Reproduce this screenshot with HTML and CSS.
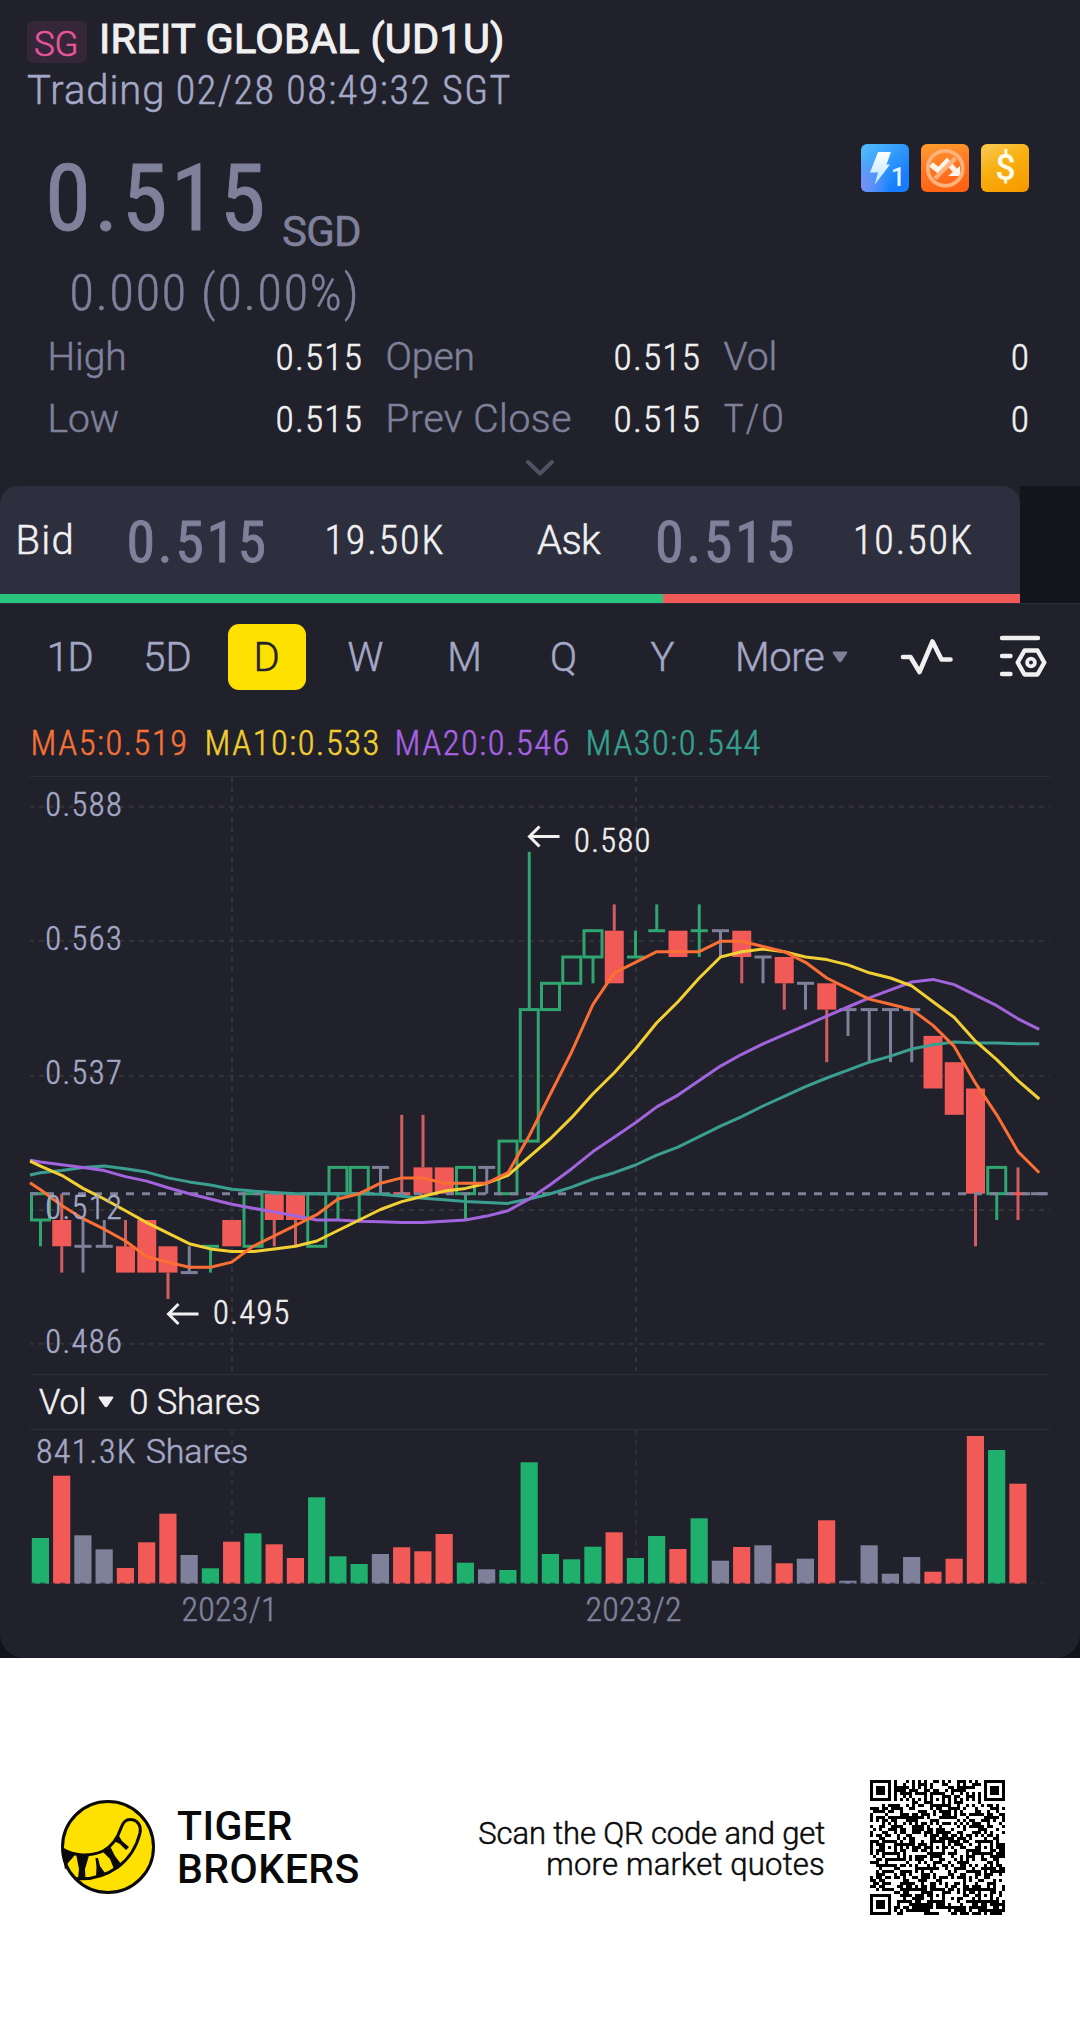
FILE: index.html
```html
<!DOCTYPE html>
<html lang="en">
<head>
<meta charset="utf-8">
<title>IREIT GLOBAL (UD1U)</title>
<link rel="stylesheet" href="styles.css">
</head>
<body>
<main class="card">
  <header class="header">
    <div class="title-row"><span class="market">SG</span><h1 class="title">IREIT GLOBAL (UD1U)</h1></div>
    <div class="status"><span class="word">Trading</span> 02/28 08:49:32 SGT</div>
  </header>

  <section class="quote">
    <div class="price">0.515</div>
    <div class="currency">SGD</div>
    <div class="badges">
      <svg width="48" height="48" viewBox="0 0 48 48">
        <defs><linearGradient id="blue" x1="0.2" y1="0" x2="0.9" y2="0.7"><stop offset="0" stop-color="#4fb8fb"/><stop offset="1" stop-color="#167dfc"/></linearGradient>
        <radialGradient id="violet" cx="0" cy="0.85" r="0.6"><stop offset="0" stop-color="#7b90f7"/><stop offset="1" stop-color="#7b90f7" stop-opacity="0"/></radialGradient>
        <linearGradient id="ice" x1="0" y1="0" x2="0" y2="1"><stop offset="0" stop-color="#fff"/><stop offset="1" stop-color="#b9e2ff"/></linearGradient></defs>
        <rect width="48" height="48" rx="6" fill="url(#blue)"/><rect width="48" height="48" rx="6" fill="url(#violet)"/>
        <path d="M17 8H30L25.500 20.500H29L13.500 41L17 28.500H9Z" fill="url(#ice)"/>
        <text class="badge-one" x="30" y="42">1</text>
      </svg>
      <svg width="48" height="48" viewBox="0 0 48 48">
        <defs><linearGradient id="orange" x1="0.4" y1="0" x2="0.6" y2="1"><stop offset="0" stop-color="#ff9a2c"/><stop offset="0.5" stop-color="#ff7323"/><stop offset="1" stop-color="#ff6210"/></linearGradient></defs>
        <rect width="48" height="48" rx="6" fill="url(#orange)"/>
        <path d="M10 20.500L17.500 26.500L26 17.500L34 26.500" fill="none" stroke="#fff5ea" stroke-width="5.500"/>
        <path d="M39 22V32H27Z" fill="#fff5ea"/>
        <path d="M14 34.500L34.500 14" stroke="#ffb27a" stroke-width="4.500"/>
        <circle cx="24.300" cy="24.300" r="17.500" fill="none" stroke="#ffb27a" stroke-width="3.800"/>
      </svg>
      <svg width="48" height="48" viewBox="0 0 48 48">
        <defs><linearGradient id="gold" x1="0.3" y1="0" x2="0.8" y2="1"><stop offset="0" stop-color="#f9c648"/><stop offset="0.4" stop-color="#f7b010"/><stop offset="1" stop-color="#f89a02"/></linearGradient></defs>
        <rect width="48" height="48" rx="6" fill="url(#gold)"/>
        <text class="badge-dollar" x="24.500" y="35.500">$</text>
      </svg>
    </div>
  </section>
  <div class="change">0.000 (0.00%)</div>

  <section class="stats">
    <div class="stat"><span>High</span><b>0.515</b></div>
    <div class="stat"><span>Open</span><b>0.515</b></div>
    <div class="stat"><span>Vol</span><b>0</b></div>
    <div class="stat"><span>Low</span><b>0.515</b></div>
    <div class="stat"><span class="prev">Prev Close</span><b>0.515</b></div>
    <div class="stat"><span class="turnover">T/O</span><b>0</b></div>
  </section>
  <div class="expand"><svg width="30" height="20" viewBox="0 0 30 20"><path d="M3 3L15 14.500L27 3" fill="none" stroke="#515163" stroke-width="4" stroke-linecap="round" stroke-linejoin="round"/></svg></div>

  <section class="depth">
    <div class="depth-main">
      <div class="sides">
        <div class="side"><span class="side-name">Bid</span><span class="side-price">0.515</span><span class="side-size">19.50K</span></div>
        <div class="side ask"><span class="side-name">Ask</span><span class="side-price">0.515</span><span class="side-size">10.50K</span></div>
      </div>
      <div class="ratio"><i class="ratio-bid" style="width:65%"></i><i class="ratio-ask" style="width:35%"></i></div>
    </div>
  </section>

  <nav class="periods">
    <span class="tab one-day">1D</span><span class="tab">5D</span><span class="tab active">D</span><span class="tab">W</span><span class="tab">M</span><span class="tab">Q</span><span class="tab">Y</span>
    <span class="more">More<svg width="16" height="12" viewBox="0 0 16 12"><path d="M1.500 .5H14.500Q16 .5 15.200 2L9.500 10.500Q8 12 6.500 10.500L.8 2Q0 .5 1.500 .5Z" fill="#7f819b"/></svg></span>
    <svg class="tool" width="56" height="46" viewBox="899 636 56 46"><path d="M903 659H910.500L919.500 674L932.500 643.500L941.500 661.500H950.500" fill="none" stroke="#f0f0f0" stroke-width="4.600" stroke-linecap="round" stroke-linejoin="round"/></svg>
    <svg class="tool" width="50" height="46" viewBox="998 636 50 46"><g fill="none" stroke="#f0f0f0" stroke-width="4.400" stroke-linecap="round" stroke-linejoin="round"><path d="M1002 640H1038M1002 658H1010.500M1002 676H1010.500M1024.500 652.500H1037.500L1044.300 664.500L1037.500 676.500H1024.500L1017.700 664.500Z"/><circle cx="1031" cy="664.500" r="3.900" stroke-width="3.800"/></g></svg>
  </nav>

  <div class="legend"><span class="ma5">MA5:0.519</span><span class="ma10">MA10:0.533</span><span class="ma20">MA20:0.546</span><span class="ma30">MA30:0.544</span></div>

  <svg class="chart" id="candles" width="1080" height="612" viewBox="0 763 1080 612"></svg>
  <div class="vol-head"><span>Vol</span><svg width="16" height="12" viewBox="0 0 16 12"><path d="M1.500 .5H14.500Q16 .5 15.200 2L9.500 10.500Q8 12 6.500 10.500L.8 2Q0 .5 1.500 .5Z" fill="#f0f0f0"/></svg><span>0 Shares</span></div>
  <svg class="chart" id="volume" width="1080" height="229" viewBox="0 1429 1080 229"></svg>
</main>

<footer class="footer">
  <svg class="logo" width="96" height="96" viewBox="0 0 96 96">
    <circle cx="48" cy="48" r="45.500" fill="#ffe100" stroke="#0a0a0a" stroke-width="3"/>
    <path d="M2.500 50C14 57 30 58 43 52C53 47 58 38 61 29C63 23 66 20.500 70 20.500C77 20.500 81.500 26 80 34C77 46 70 59 58 68C45 77 29 81 15 79.500" fill="none" stroke="#0a0a0a" stroke-width="3"/>
    <path d="M2 49L15 56L8 64L5 71ZM16 55L29 56.500L25 70L25.500 80H18L19 70ZM35.500 59H38L40 67L45 74L36 78L36.500 68ZM42 52L50 47L55 57L61 65L54 70L50 60ZM54 42L59 37L62 42L69 48L66 51L60 45Z" fill="#0a0a0a"/>
  </svg>
  <div class="brand"><div class="brand-top">TIGER</div><div>BROKERS</div></div>
  <div class="scan"><div class="scan-top">Scan the QR code and get</div><div>more market quotes</div></div>
  <svg class="qr" id="qr" width="135" height="135" viewBox="0 0 45 45" shape-rendering="crispEdges"></svg>
</footer>
<script src="chart.js"></script>
</body>
</html>
```
FILE: styles.css
```css
* { box-sizing: border-box; }
html { background: linear-gradient(#12121b 1658px, #fff 1658px); }
body {
  margin: 0;
  width: 1080px;
  font-family: Roboto, "Liberation Sans", sans-serif;
  font-weight: 300;
  -webkit-text-stroke: .5px;
  white-space: nowrap;
  color: #f0f0f0;
}
/* Figures are set in the narrow cut. */
.status, .price, .change, .turnover, .stat b, .side-price, .side-size, .legend, .chart {
  font-family: "Roboto Condensed", Roboto, sans-serif;
}
svg { display: block; flex: none; }
.card {
  height: 1658px;
  background: #21212b;
  border-radius: 0 0 24px 24px;
  overflow: hidden;
}

.header { padding: 14px 0 0 27px; height: 114px; }
.title-row { display: flex; gap: 12px; height: 52px; }
.market {
  width: 60px; height: 42px; margin-top: 7px; padding-left: 7px;
  border-radius: 6px; background: #35263a; color: #e8569a;
  font-size: 35px; line-height: 47px; letter-spacing: -.2px;
}
.title { margin: 0; font-size: 41.5px; font-weight: 400; line-height: 49px; letter-spacing: .2px; -webkit-text-stroke: 1px; }
.status { font-size: 40px; line-height: 50px; letter-spacing: 1.550px; color: #a3a8c6; }
.word { font-family: Roboto, sans-serif; letter-spacing: .9px; }

.quote { display: flex; height: 108px; margin-top: 30px; padding: 0 51px 0 45px; color: #7f819b; font-weight: 400; -webkit-text-stroke: .8px; }
.price { margin-top: 10px; font-size: 93px; line-height: 90px; letter-spacing: 3.100px; width: 222px; }
.currency { margin: 67px 0 0 15px; font-size: 42px; line-height: 42px; letter-spacing: -.8px; -webkit-text-stroke: .5px; }
.badges { display: flex; gap: 12px; margin-left: auto; height: 48px; -webkit-text-stroke: 0; }
.badge-one { font-size: 25px; font-weight: 500; fill: #e4f4ff; }
.badge-dollar { font-size: 36px; font-weight: 500; fill: #fffbe8; text-anchor: middle; }
.change { margin-top: 16px; padding-left: 69.500px; font-size: 50px; line-height: 50px; height: 57px; letter-spacing: 1.850px; color: #7f819b; }

.stats { display: grid; grid-template-columns: 315px 315px 306px; column-gap: 23px; grid-auto-rows: 62px; height: 125px; padding-left: 47.500px; }
.stat { display: flex; justify-content: space-between; font-size: 39px; line-height: 64px; color: #7f819b; letter-spacing: -.05px; }
.stat .prev { letter-spacing: .550px; }
.stat .turnover { letter-spacing: 1.700px; }
.stat b { font-weight: 300; font-size: 37.5px; color: #f0f0f0; letter-spacing: 1.100px; margin-right: -.5px; }
.expand { height: 36px; padding-top: 9px; display: flex; justify-content: center; }

.depth { height: 118px; background: linear-gradient(#14141d, #14141d) right / 60px 100% no-repeat; border-bottom: 1px solid #2d2e3a; }
.depth-main { width: 1020px; height: 117px; border-radius: 18px 18px 0 0; background: #2d2e3e; overflow: hidden; }
.sides { display: flex; height: 108px; line-height: 110px; font-size: 40px; }
.side { display: grid; grid-template-columns: 111px 198px 200px; width: 518.500px; padding-left: 15.500px; }
.side.ask { padding-left: 18.500px; grid-template-columns: 118px 198px 160px; }
.side-name { letter-spacing: 1.300px; }
.ask .side-name { letter-spacing: -.6px; }
.side-price { font-size: 58px; font-weight: 400; letter-spacing: 2.450px; color: #7f819b; line-height: 112px; -webkit-text-stroke: .8px; }
.side-size { letter-spacing: 1.900px; }
.ratio { display: flex; height: 9px; }
.ratio-bid { background: #29c57e; }
.ratio-ask { background: #f25a57; }

.periods { display: flex; margin: 20px 0 0 19px; height: 66px; align-items: center; font-size: 40px; color: #a3a8c6; }
.tab { width: 99px; height: 66px; line-height: 68px; text-align: center; }
.tab.one-day { letter-spacing: -1.500px; padding-left: 2px; }
.tab.active { width: 78px; margin: 0 10.500px; border-radius: 11px; background: #ffe100; color: #21212b; }
.more { display: flex; align-items: center; gap: 8px; width: 187px; height: 68px; padding-left: 23px; letter-spacing: -.4px; }
.tool { margin-right: 43px; }
.tool:last-child { margin: 0; }

.legend { display: flex; margin-top: 33px; height: 40px; line-height: 40px; padding-left: 30.500px; font-size: 34.5px; letter-spacing: 1.550px; }
.ma5 { width: 174px; color: #f57237; }
.ma10 { width: 190px; color: #f0ce30; }
.ma20 { width: 191px; color: #a762e2; }
.ma30 { color: #36a08f; }

.chart text { stroke: currentColor; stroke-width: .5px; -webkit-text-stroke: 0; }
.axis { font-size: 32.5px; fill: #a3a8c6; color: #a3a8c6; letter-spacing: 1.350px; }
.mark { font-size: 32.5px; fill: #f0f0f0; color: #f0f0f0; letter-spacing: 1.350px; }
.peak { font-size: 34px; fill: #a3a8c6; color: #a3a8c6; letter-spacing: 1.300px; }
.unit { font-family: Roboto, sans-serif; letter-spacing: -.1px; }
.date { font-size: 34px; fill: #7f819b; color: #7f819b; letter-spacing: .25px; }

.vol-head { display: flex; align-items: center; height: 54px; padding-left: 39px; font-size: 34.5px; letter-spacing: -.1px; }
.vol-head svg { margin: 0 15px 0 12px; }

.footer { display: flex; height: 380px; padding-left: 60px; align-items: flex-start; color: #0a0a0a; }
.logo { margin-top: 141px; }
.brand { margin: 147px 0 0 21px; width: 200px; font-size: 41px; line-height: 43px; font-weight: 500; letter-spacing: .45px; -webkit-text-stroke: 0; }
.scan { margin: 160px 0 0 auto; font-size: 31px; line-height: 31px; text-align: right; letter-spacing: .2px; }
.scan-top { letter-spacing: -.15px; }
.qr { margin: 122px 75px 0 45px; }
```
FILE: chart.js
```js
const GREEN = '#2fa56f', RED = '#f25a57', WICK = '#d05e60', GRAY = '#7f819b';
const x = i => 40.5 + 21.25 * i;
// Prices are counted in ticks of 0.005 from the last close, 0.515.
const y = k => 1193.7 - 26.3 * k;

// [open, close, high, low, colour]
const candles = [
  [-1,0,0,-2,'g'],[-1,-2,0,-3,'r'],[-2,-2,-1,-3,'n'],[-2,-2,-1,-2,'n'],[-2,-3,-1,-3,'r'],
  [-1,-3,-1,-3,'r'],[-2,-3,-2,-4,'r'],[-3,-3,-2,-3,'n'],[-2,-2,-2,-3,'g'],[-1,-2,-1,-2,'r'],
  [-2,0,0,-2,'g'],[0,-1,0,-2,'r'],[0,-1,0,-2,'r'],[-2,0,0,-2,'g'],[0,1,1,-1,'g'],
  [0,1,1,-1,'g'],[1,1,1,0,'n'],[0,0,3,0,'r'],[1,0,3,0,'r'],[1,0,1,0,'r'],
  [0,1,1,-1,'g'],[1,1,1,0,'n'],[0,2,2,0,'g'],[2,7,13,2,'g'],[7,8,8,7,'g'],
  [8,9,9,8,'g'],[9,10,10,8,'g'],[10,8,11,8,'r'],[9,9,10,9,'g'],[10,10,11,10,'g'],
  [10,9,10,9,'r'],[10,10,11,9,'g'],[10,10,10,9,'n'],[10,9,10,8,'r'],[9,9,9,8,'n'],
  [9,8,9,7,'r'],[8,8,8,7,'n'],[8,7,8,5,'r'],[7,7,7,6,'n'],[7,7,7,5,'n'],
  [7,7,7,5,'n'],[7,7,7,5,'n'],[6,4,6,4,'r'],[5,3,5,3,'r'],[4,0,4,-2,'r'],
  [0,1,1,-1,'g'],[0,0,1,-1,'r'],[0,0,0,0,'n']
];
// Averages over days that start before the visible range; the first value is the left edge.
const lead = {
  5: [.42, .15, -.45, -.95, -1.35],
  10: [1.24, 1.05, .7, .2, -.2, -.65, -1.1, -1.5, -1.9, -2.1],
  20: [1.27, 1.2, 1.1, 1, .88, .65, .48, .23, 0, -.2, -.4, -.55, -.7, -.84, -1, -1, -1.05, -1.07, -1.1, -1.1],
  30: [.71, .8, .88, 1, 1.05, .95, .82, .6, .45, .33, .17, .1, .05, 0, 0, 0, 0, -.02, -.1, -.17, -.23, -.3, -.33, -.37, -.2, 0, .25, .56, .8, 1.09]
};
const line = (x1, y1, x2, y2, c, w, extra = '') =>
  `<path d="M${x1} ${y1}L${x2} ${y2}" stroke="${c}" stroke-width="${w}" ${extra}/>`;

let s = line(30, 776.5, 1050, 776.5, '#2d2e3a', 1) + line(30, 1374.5, 1050, 1374.5, '#2d2e3a', 1);
for (const gy of [806.7, 940.8, 1075.7, 1210, 1343.7]) s += line(30, gy, 1050, gy, '#333338', 2, 'stroke-dasharray="5 5" stroke-dashoffset="1"');
for (const gx of [232, 636]) s += line(gx, 777, gx, 1371, '#333338', 2, 'stroke-dasharray="5 5"');
candles.forEach(([o, c, h, l, t], i) => {
  const cx = x(i), top = y(Math.max(o, c)), bot = y(Math.min(o, c));
  const wick = { g: GREEN, r: WICK, n: GRAY }[t];
  if (y(h) < top) s += line(cx, y(h), cx, top, wick, 3);
  if (y(l) > bot) s += line(cx, bot, cx, y(l), wick, 3);
  if (o === c) s += line(cx - 8.5, top, cx + 8.5, top, t === 'r' ? RED : wick, 3);
  else if (t === 'r') s += `<rect x="${cx - 9.5}" y="${top}" width="19" height="${bot - top}" fill="${RED}"/>`;
  else s += `<rect x="${cx - 9}" y="${top}" width="18" height="${bot - top}" fill="none" stroke="${GREEN}" stroke-width="3"/>`;
});
s += line(30, y(0), 1048, y(0), GRAY, 3, 'stroke-dasharray="8 8"');
const colors = { 30: '#3a9f90', 20: '#a264dc', 10: '#f2d034', 5: '#fb6f34' };
for (const n of [30, 20, 10, 5]) {
  const v = lead[n].slice();
  for (let i = v.length - 1; i < candles.length; i++) v.push(candles.slice(i - n + 1, i + 1).reduce((a, c) => a + c[1], 0) / n);
  const pts = v.map((k, j) => (j ? x(j - 1) : 30) + ',' + y(k).toFixed(1)).join(' ');
  s += `<polyline points="${pts}" fill="none" stroke="${colors[n]}" stroke-width="3" stroke-linejoin="round"/>`;
}
[['0.588', 815.7], ['0.563', 949.5], ['0.537', 1084], ['0.512', 1218.8], ['0.486', 1352.6]].forEach(([t, ty]) => s += `<text class="axis" x="45.3" y="${ty}">${t}</text>`);
const arrow = (ax, ay) => `<path d="M${ax + 11} ${ay - 10}L${ax + 1} ${ay}L${ax + 11} ${ay + 10}M${ax + 1} ${ay}H${ax + 31}" fill="none" stroke="#f0f0f0" stroke-width="3"/>`;
s += arrow(528.5, 836.5) + '<text class="mark" x="574" y="852">0.580</text>' + arrow(167.5, 1314) + '<text class="mark" x="213" y="1324">0.495</text>';
document.getElementById('candles').innerHTML = s;

// Volume bars: colour and top edge, in thirds of a pixel below the chart's lower frame.
const vol = 'g534 r347 n526 n568 r624 r547 r461 n585 g625 r545 g520 r553 r594 g412 g589 g612 n582 r562 r574 r522 g608 n628 g630 g307 g582 g598 g560 r517 g594 g528 r567 g475 n602 r561 n556 r610 n596 r481 n662 n556 n641 n591 r635 r596 r228 g270 r371'.split(' ');
let v = line(30, 1429.5, 1050, 1429.5, '#2d2e3a', 1);
for (const gx of [232, 636]) v += line(gx, 1430, gx, 1583, '#2d2e3a', 2, 'stroke-dasharray="5 5"');
vol.forEach((b, i) => {
  const top = 1360 + b.slice(1) / 3;
  v += `<rect x="${x(i) - 8.7}" y="${top.toFixed(1)}" width="17.2" height="${(1583.7 - top).toFixed(1)}" fill="${{ g: '#20b06d', r: RED, n: GRAY }[b[0]]}"/>`;
});
v += line(30, 1583.2, 1050, 1583.2, '#2d2e3a', 1, 'stroke-dasharray="5 5"');
v += '<text class="peak" x="36" y="1463">841.3K <tspan class="unit">Shares</tspan></text><text class="date" x="181.500" y="1621">2023/1</text><text class="date" x="585.500" y="1621">2023/2</text>';
document.getElementById('volume').innerHTML = v;

// QR symbol, version 7: 45 x 45 modules.
const N = 45;
let seed = 20230228;
const rnd = () => (seed = (seed * 1103515245 + 12345) % 2147483648) / 2147483648;
const ring = (dx, dy) => Math.max(Math.abs(dx), Math.abs(dy));
let q = '';
for (let r = 0; r < N; r++) for (let c = 0; c < N; c++) {
  let on = rnd() < .5;
  if (r === 6 || c === 6) on = (r + c) % 2 === 0;
  for (const [ar, ac] of [[6, 22], [22, 6], [22, 22], [22, 38], [38, 22], [38, 38]]) {
    const d = ring(r - ar, c - ac);
    if (d <= 2) on = d !== 1;
  }
  for (const [fr, fc] of [[3, 3], [3, 41], [41, 3]]) {
    const d = ring(r - fr, c - fc);
    if (d <= 4) on = d <= 1 || d === 3;
  }
  if (on) q += `M${c} ${r}h1v1h-1z`;
}
document.getElementById('qr').innerHTML = `<path d="${q}" fill="#000"/>`;
```
